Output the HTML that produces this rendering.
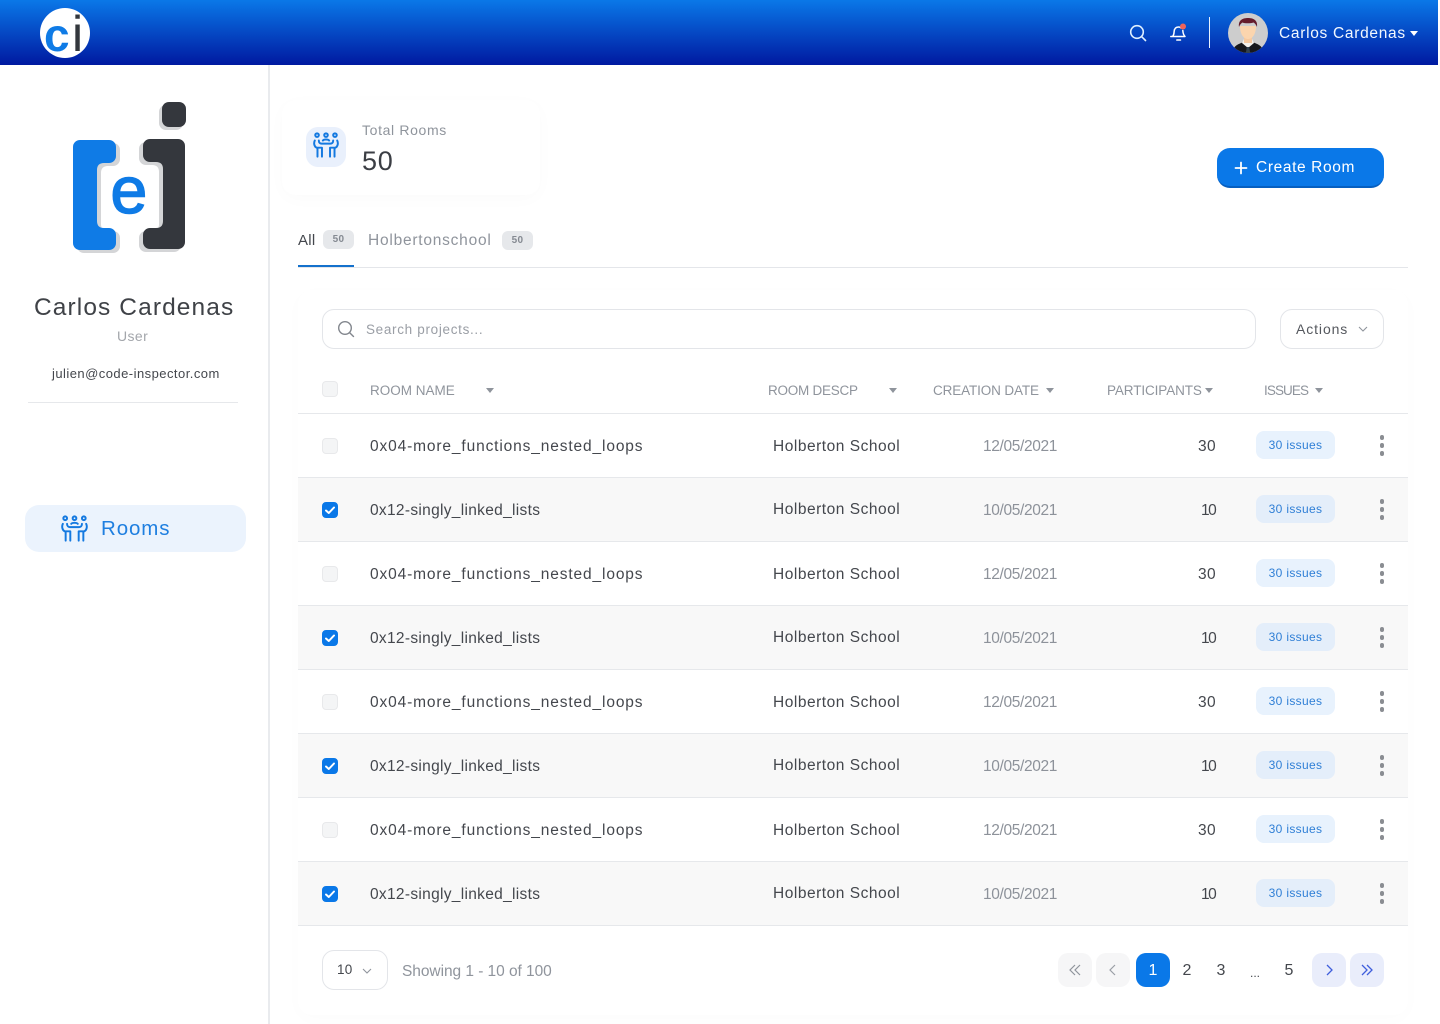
<!DOCTYPE html>
<html lang="en"><head><meta charset="utf-8"><title>Rooms</title>
<style>
*{box-sizing:border-box;margin:0;padding:0}
html,body{width:1440px;height:1024px;overflow:hidden;background:#fff;font-family:"Liberation Sans",sans-serif;color:#44474d}
.a,.t{position:absolute}
.t{white-space:nowrap;line-height:20px}
#hd{left:0;top:0;width:1438px;height:65px;background:linear-gradient(180deg,#0a78e8 0%,#0019a0 100%)}
#sb{left:268px;top:65px;width:1.5px;height:959px;background:#e9ebee}
.row{position:absolute;left:298px;width:1110px;height:64px;border-bottom:1px solid #e6e8eb}
.row.alt{background:#f8f8f8}
.row .n{left:72px;top:23px;font-size:15.5px;letter-spacing:.87px}
.row.alt .n{letter-spacing:.31px}
.row .d{left:475px;top:23px;font-size:15.5px;letter-spacing:.52px}
.row.alt .d{top:22px}
.row .c{left:685px;top:23px;font-size:15.5px;letter-spacing:-.35px;color:#8d929a}
.row .p{left:900px;top:23px;font-size:15.5px;letter-spacing:.4px}
.row.alt .p{left:903px;letter-spacing:-1.5px}
.row .b{position:absolute;left:958px;top:17px;width:79px;height:28px;border-radius:8px;background:#e8f2fd;color:#2f7fd6;font-size:12px;line-height:28px;text-align:center;letter-spacing:.33px}
.row.alt .b{background:#e4eefa}
.dot{position:absolute;left:1081.5px;width:4.5px;height:4.5px;border-radius:50%;background:#8a8d92}
.cb{position:absolute;left:24px;top:24px;width:16px;height:16px;border-radius:4px;background:#f4f5f6;border:1px solid #e8e9eb}
.cb.on{background:#0a78e8;border-color:#0a78e8}
.th{top:381px;font-size:13.5px;color:#8f949c}
.car{position:absolute;width:0;height:0;border-left:4px solid transparent;border-right:4px solid transparent;border-top:5px solid #8f949c}
.pg{position:absolute;top:953px;width:34px;height:34px;border-radius:10px;text-align:center;line-height:36px;font-size:16px}
</style></head><body>

<div class="a" id="hd"></div>
<svg class="a" style="left:40px;top:8px" width="50" height="50" viewBox="0 0 50 50"><circle cx="25" cy="25" r="25" fill="#fff"/><text x="4" y="43" font-family="Liberation Sans" font-weight="700" font-size="46" fill="#0f7be6">c</text><text x="32" y="43" font-family="Liberation Sans" font-size="50" fill="#33373d">i</text></svg>

<svg class="a" style="left:1128px;top:23px" width="20" height="20" viewBox="0 0 20 20" fill="none" stroke="#dff0ff" stroke-width="1.6" stroke-linecap="round"><circle cx="9" cy="9" r="6.3"/><path d="M13.7 13.7l3.800 3.800"/></svg>
<svg class="a" style="left:1168px;top:21px" width="22" height="22" viewBox="0 0 22 22" fill="none" stroke="#fff" stroke-width="1.5" stroke-linecap="round" stroke-linejoin="round"><path d="M4.500 15.500c1.300-1.300 1.500-2.600 1.600-4.800.2-2.800 1.700-4.700 4.400-4.700 1 0 1.800.3 2.500.9M14.800 9.500c.2 2.800.8 4.600 2.200 6H2.800"/><path d="M8.800 19h3.700"/><circle cx="15" cy="5.500" r="3" fill="#f0645a" stroke="none"/></svg>
<div class="a" style="left:1209px;top:17px;width:1px;height:31px;background:#e8f2ff"></div>
<svg class="a" style="left:1228px;top:13px" width="40" height="40" viewBox="0 0 40 40"><defs><clipPath id="av"><circle cx="20" cy="20" r="20"/></clipPath></defs><g clip-path="url(#av)"><rect width="40" height="40" fill="#cdcdcd"/><path d="M4 40c1-7 6-9 12-11h8c6 2 11 4 12 11z" fill="#17181c"/><path d="M14 30l6 5 6-5-2-4h-8z" fill="#f4f1ec"/><path d="M18.800 34h2.400l1 6h-4.400z" fill="#33424f"/><rect x="16" y="22" width="8" height="8" fill="#f5c9a0"/><path d="M12 13c0 8 3.500 13 8 13s8-5 8-13z" fill="#fbd5ae"/><path d="M11 14c-1-7 4-9 9-9s10 2 9 9c-1-2.500-2-3.500-3.500-4.500-3 1-9 1-11 0-1.500 1-2.500 2-3.500 4.500z" fill="#651c2c"/></g></svg>
<div class="t" style="left:1279px;top:24px;color:#f2f8ff;font-size:15.5px;letter-spacing:.7px">Carlos Cardenas</div>
<div class="car" style="left:1410px;top:31px;border-top-color:#fff"></div>

<div class="a" id="sb"></div>
<svg class="a" style="left:60px;top:95px" width="140" height="170" viewBox="60 95 140 170">
<g fill="#d4d5d7">
<path transform="translate(4,3)" d="M80 140h29a7 7 0 0 1 7 7v9a7 7 0 0 1-7 7h-5q-7 0-7 7v51q0 7 7 7h5a7 7 0 0 1 7 7v8a7 7 0 0 1-7 7H80a7 7 0 0 1-7-7V147a7 7 0 0 1 7-7z"/>
<path transform="translate(-4,3)" d="M150 139h28a7 7 0 0 1 7 7v96a7 7 0 0 1-7 7h-28a7 7 0 0 1-7-7v-7a7 7 0 0 1 7-7h6q7 0 7-7v-52q0-7-7-7h-6a7 7 0 0 1-7-7v-9a7 7 0 0 1 7-7z"/>
<rect x="159" y="105" width="24" height="25" rx="7"/></g>
<path d="M80 140h29a7 7 0 0 1 7 7v9a7 7 0 0 1-7 7h-5q-7 0-7 7v51q0 7 7 7h5a7 7 0 0 1 7 7v8a7 7 0 0 1-7 7H80a7 7 0 0 1-7-7V147a7 7 0 0 1 7-7z" fill="#0f7be6"/>
<path d="M150 139h28a7 7 0 0 1 7 7v96a7 7 0 0 1-7 7h-28a7 7 0 0 1-7-7v-7a7 7 0 0 1 7-7h6q7 0 7-7v-52q0-7-7-7h-6a7 7 0 0 1-7-7v-9a7 7 0 0 1 7-7z" fill="#34373d"/>
<rect x="162" y="102" width="24" height="25" rx="7" fill="#34373d"/>
<text x="110.500" y="213" font-family="Liberation Sans" font-size="66" fill="#0f7be6" stroke="#0f7be6" stroke-width="1.600">e</text>
</svg>
<div class="t" style="left:34px;top:298px;font-size:24.5px;letter-spacing:1.1px;color:#3f4247">Carlos Cardenas</div>
<div class="t" style="left:117px;top:326px;font-size:14px;letter-spacing:.4px;color:#a3a6ab">User</div>
<div class="t" style="left:52px;top:364px;font-size:13px;letter-spacing:.46px;color:#44474d">julien@code-inspector.com</div>
<div class="a" style="left:28px;top:402px;width:210px;height:1px;background:#e6e8eb"></div>
<div class="a" style="left:25px;top:505px;width:221px;height:47px;border-radius:14px;background:#ebf3fd"></div>
<svg class="a" style="left:61px;top:515px" width="27" height="27" viewBox="0 0 29 29" fill="none" stroke="#1479e0" stroke-width="2.100" stroke-linecap="round" stroke-linejoin="round"><circle cx="4.500" cy="3.500" r="2"/><circle cx="14.500" cy="3.500" r="2"/><circle cx="24.500" cy="3.500" r="2"/><path d="M2 9.500c-1.500 3-.5 7 2 8h6v10M27 9.500c1.500 3 .5 7-2 8h-6v10M6.500 9.500c0 2.500 1.500 3.500 3 3.500h10c1.500 0 3-1 3-3.500M11 9.500c1-1.500 6-1.500 7 0M5 18v9.500M24 18v9.500"/></svg>
<div class="t" style="left:101px;top:519px;font-size:20.5px;letter-spacing:.9px;color:#1f7fe0">Rooms</div>

<div class="a" style="left:282px;top:100px;width:258px;height:95px;border-radius:14px;box-shadow:0 4px 18px rgba(40,50,70,.02)"></div>
<div class="a" style="left:306px;top:127px;width:40px;height:40px;border-radius:12px;background:#e9f0fc"></div>
<svg class="a" style="left:313px;top:132px" width="26" height="26" viewBox="0 0 29 29" fill="none" stroke="#1479e0" stroke-width="2.200" stroke-linecap="round" stroke-linejoin="round"><circle cx="4.500" cy="3.500" r="2"/><circle cx="14.500" cy="3.500" r="2"/><circle cx="24.500" cy="3.500" r="2"/><path d="M2 9.500c-1.500 3-.5 7 2 8h6v10M27 9.500c1.500 3 .5 7-2 8h-6v10M6.500 9.500c0 2.500 1.500 3.500 3 3.500h10c1.500 0 3-1 3-3.500M11 9.500c1-1.500 6-1.500 7 0M5 18v9.500M24 18v9.500"/></svg>
<div class="t" style="left:362px;top:120px;font-size:14px;letter-spacing:.65px;color:#8f949c">Total Rooms</div>
<div class="t" style="left:362px;top:151px;font-size:27px;letter-spacing:.7px;color:#3b3e44">50</div>

<div class="a" style="left:1217px;top:148px;width:167px;height:40px;border-radius:13px;background:#0a78e8;border-bottom:2px solid #065fc0"></div>
<svg class="a" style="left:1234px;top:161px" width="14" height="14" viewBox="0 0 14 14" stroke="#fff" stroke-width="1.800" stroke-linecap="round"><path d="M7 1.500v11M1.500 7h11"/></svg>
<div class="t" style="left:1256px;top:158px;color:#fff;font-size:15.5px;letter-spacing:.62px">Create Room</div>

<div class="t" style="left:298px;top:231px;font-size:15px;letter-spacing:.3px;color:#44474d">All</div>
<div class="a" style="left:323px;top:230px;width:31px;height:19px;border-radius:6px;background:#e6e8eb;color:#858a92;font-size:10px;font-weight:700;line-height:20px;text-align:center;letter-spacing:.3px">50</div>
<div class="t" style="left:368px;top:231px;font-size:15.5px;letter-spacing:.77px;color:#8f949c">Holbertonschool</div>
<div class="a" style="left:502px;top:231px;width:31px;height:19px;border-radius:6px;background:#e6e8eb;color:#858a92;font-size:10px;font-weight:700;line-height:20px;text-align:center;letter-spacing:.3px">50</div>
<div class="a" style="left:298px;top:267px;width:1110px;height:1px;background:#e4e6ea"></div>
<div class="a" style="left:298px;top:265px;width:56px;height:2px;background:#1471cc"></div>

<div class="a" style="left:298px;top:290px;width:1110px;height:725px;border-radius:14px;box-shadow:0 4px 18px rgba(40,50,70,.015)"></div>
<div class="a" style="left:322px;top:309px;width:934px;height:40px;border-radius:12px;border:1px solid #e3e5e9;background:#fff"></div>
<svg class="a" style="left:337px;top:320px" width="18" height="18" viewBox="0 0 18 18" fill="none" stroke="#82868d" stroke-width="1.400" stroke-linecap="round"><circle cx="8" cy="8" r="6.300"/><path d="M12.700 12.700l3.800 3.800"/></svg>
<div class="t" style="left:366px;top:320px;font-size:13.5px;letter-spacing:.68px;color:#9a9ea5">Search projects...</div>
<div class="a" style="left:1280px;top:309px;width:104px;height:40px;border-radius:12px;border:1px solid #e3e5e9"></div>
<div class="t" style="left:1296px;top:319px;font-size:14px;letter-spacing:.9px;color:#55585e">Actions</div>
<svg class="a" style="left:1358px;top:326px" width="10" height="6" viewBox="0 0 10 6" fill="none" stroke="#8f949c" stroke-width="1.100"><path d="M1 1l4 4 4-4"/></svg>

<div class="cb" style="left:322px;top:381px"></div>
<div class="t th" style="left:370px">ROOM NAME</div><div class="car" style="left:486px;top:388px"></div>
<div class="t th" style="left:768px;letter-spacing:-.25px">ROOM DESCP</div><div class="car" style="left:889px;top:388px"></div>
<div class="t th" style="left:933px;letter-spacing:-.13px">CREATION DATE</div><div class="car" style="left:1046px;top:388px"></div>
<div class="t th" style="left:1107px;letter-spacing:-.1px">PARTICIPANTS</div><div class="car" style="left:1205px;top:388px"></div>
<div class="t th" style="left:1264px;letter-spacing:-.9px">ISSUES</div><div class="car" style="left:1315px;top:388px"></div>
<div class="a" style="left:298px;top:413px;width:1110px;height:1px;background:#e6e8eb"></div>

<div class="row" style="top:414px"><div class="cb"></div><div class="t n">0x04-more_functions_nested_loops</div><div class="t d">Holberton School</div><div class="t c">12/05/2021</div><div class="t p">30</div><div class="b">30 issues</div><i class="dot" style="top:21px"></i><i class="dot" style="top:29px"></i><i class="dot" style="top:37px"></i></div>
<div class="row alt" style="top:478px"><div class="cb on"><svg width="14" height="14" viewBox="0 0 14 14" fill="none" stroke="#fff" stroke-width="2" stroke-linecap="round" stroke-linejoin="round"><path d="M3 7.500l2.800 2.500L11 4.500"/></svg></div><div class="t n">0x12-singly_linked_lists</div><div class="t d">Holberton School</div><div class="t c">10/05/2021</div><div class="t p">10</div><div class="b">30 issues</div><i class="dot" style="top:21px"></i><i class="dot" style="top:29px"></i><i class="dot" style="top:37px"></i></div>
<div class="row" style="top:542px"><div class="cb"></div><div class="t n">0x04-more_functions_nested_loops</div><div class="t d">Holberton School</div><div class="t c">12/05/2021</div><div class="t p">30</div><div class="b">30 issues</div><i class="dot" style="top:21px"></i><i class="dot" style="top:29px"></i><i class="dot" style="top:37px"></i></div>
<div class="row alt" style="top:606px"><div class="cb on"><svg width="14" height="14" viewBox="0 0 14 14" fill="none" stroke="#fff" stroke-width="2" stroke-linecap="round" stroke-linejoin="round"><path d="M3 7.500l2.800 2.500L11 4.500"/></svg></div><div class="t n">0x12-singly_linked_lists</div><div class="t d">Holberton School</div><div class="t c">10/05/2021</div><div class="t p">10</div><div class="b">30 issues</div><i class="dot" style="top:21px"></i><i class="dot" style="top:29px"></i><i class="dot" style="top:37px"></i></div>
<div class="row" style="top:670px"><div class="cb"></div><div class="t n">0x04-more_functions_nested_loops</div><div class="t d">Holberton School</div><div class="t c">12/05/2021</div><div class="t p">30</div><div class="b">30 issues</div><i class="dot" style="top:21px"></i><i class="dot" style="top:29px"></i><i class="dot" style="top:37px"></i></div>
<div class="row alt" style="top:734px"><div class="cb on"><svg width="14" height="14" viewBox="0 0 14 14" fill="none" stroke="#fff" stroke-width="2" stroke-linecap="round" stroke-linejoin="round"><path d="M3 7.500l2.800 2.500L11 4.500"/></svg></div><div class="t n">0x12-singly_linked_lists</div><div class="t d">Holberton School</div><div class="t c">10/05/2021</div><div class="t p">10</div><div class="b">30 issues</div><i class="dot" style="top:21px"></i><i class="dot" style="top:29px"></i><i class="dot" style="top:37px"></i></div>
<div class="row" style="top:798px"><div class="cb"></div><div class="t n">0x04-more_functions_nested_loops</div><div class="t d">Holberton School</div><div class="t c">12/05/2021</div><div class="t p">30</div><div class="b">30 issues</div><i class="dot" style="top:21px"></i><i class="dot" style="top:29px"></i><i class="dot" style="top:37px"></i></div>
<div class="row alt" style="top:862px"><div class="cb on"><svg width="14" height="14" viewBox="0 0 14 14" fill="none" stroke="#fff" stroke-width="2" stroke-linecap="round" stroke-linejoin="round"><path d="M3 7.500l2.800 2.500L11 4.500"/></svg></div><div class="t n">0x12-singly_linked_lists</div><div class="t d">Holberton School</div><div class="t c">10/05/2021</div><div class="t p">10</div><div class="b">30 issues</div><i class="dot" style="top:21px"></i><i class="dot" style="top:29px"></i><i class="dot" style="top:37px"></i></div>

<div class="a" style="left:322px;top:950px;width:66px;height:40px;border-radius:12px;border:1px solid #e3e5e9"></div>
<div class="t" style="left:337px;top:960px;font-size:13.5px;letter-spacing:.3px">10</div>
<svg class="a" style="left:362px;top:968px" width="10" height="6" viewBox="0 0 10 6" fill="none" stroke="#8f949c" stroke-width="1.100"><path d="M1 1l4 4 4-4"/></svg>
<div class="t" style="left:402px;top:962px;font-size:15.5px;letter-spacing:-.05px;color:#8f949c">Showing 1 - 10 of 100</div>

<div class="pg" style="left:1058px;background:#f6f6f7"><svg width="12" height="12" viewBox="0 0 12 12" fill="none" stroke="#8f949c" stroke-width="1.200" style="margin-top:11px"><path d="M6 1L1 6l5 5M11 1L6 6l5 5"/></svg></div>
<div class="pg" style="left:1096px;background:#f6f6f7"><svg width="8" height="12" viewBox="0 0 8 12" fill="none" stroke="#9a9ea5" stroke-width="1.200" style="margin-top:11px"><path d="M6 1L1 6l5 5"/></svg></div>
<div class="pg" style="left:1136px;background:#0a78e8;color:#fff">1</div>
<div class="pg" style="left:1170px">2</div>
<div class="pg" style="left:1204px">3</div>
<div class="pg" style="left:1238px;font-size:12px;line-height:40px">...</div>
<div class="pg" style="left:1272px">5</div>
<div class="pg" style="left:1312px;background:#e9edfb"><svg width="8" height="12" viewBox="0 0 8 12" fill="none" stroke="#3f5fdc" stroke-width="1.300" style="margin-top:11px"><path d="M2 1l5 5-5 5"/></svg></div>
<div class="pg" style="left:1350px;background:#e9edfb"><svg width="12" height="12" viewBox="0 0 12 12" fill="none" stroke="#3f5fdc" stroke-width="1.300" style="margin-top:11px"><path d="M1 1l5 5-5 5M6 1l5 5-5 5"/></svg></div>

</body></html>
